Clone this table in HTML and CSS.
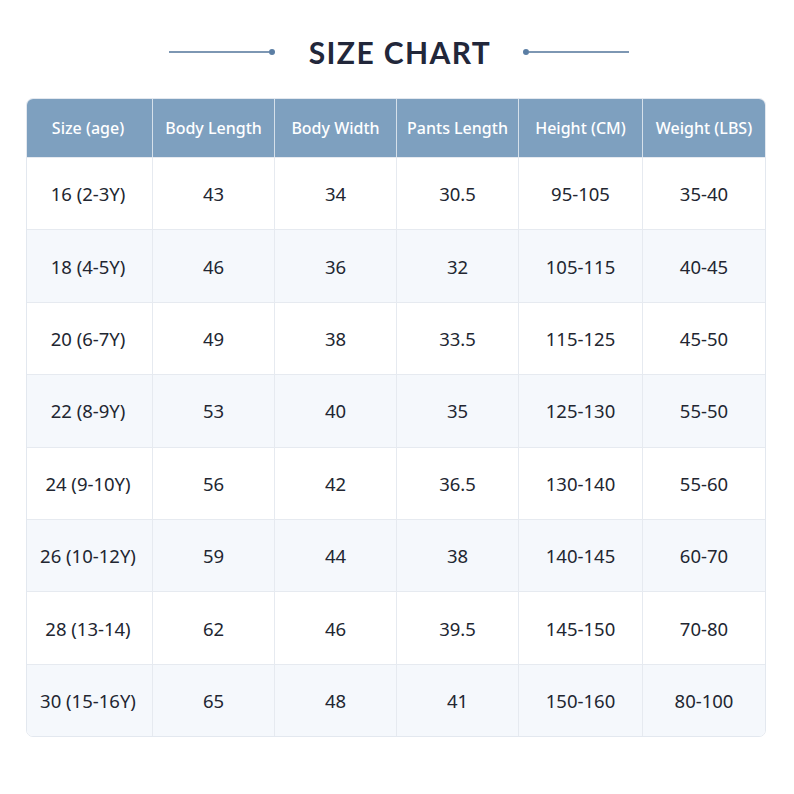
FILE: index.html
```html
<!DOCTYPE html>
<html>
<head>
<meta charset="utf-8">
<link rel="stylesheet" href="styles.css">
</head>
<body>
<div class="page">
  <div class="title-row">
    <span class="rule left"><span class="line"></span><span class="dot"></span></span>
    <h1 class="title">SIZE CHART</h1>
    <span class="rule right"><span class="dot"></span><span class="line"></span></span>
  </div>
  <div class="chart">
    <div class="row head">
      <div class="cell">Size (age)</div>
      <div class="cell">Body Length</div>
      <div class="cell">Body Width</div>
      <div class="cell">Pants Length</div>
      <div class="cell">Height (CM)</div>
      <div class="cell">Weight (LBS)</div>
    </div>
    <div class="row"><div class="cell">16 (2-3Y)</div><div class="cell">43</div><div class="cell">34</div><div class="cell">30.5</div><div class="cell">95-105</div><div class="cell">35-40</div></div>
    <div class="row alt"><div class="cell">18 (4-5Y)</div><div class="cell">46</div><div class="cell">36</div><div class="cell">32</div><div class="cell">105-115</div><div class="cell">40-45</div></div>
    <div class="row"><div class="cell">20 (6-7Y)</div><div class="cell">49</div><div class="cell">38</div><div class="cell">33.5</div><div class="cell">115-125</div><div class="cell">45-50</div></div>
    <div class="row alt"><div class="cell">22 (8-9Y)</div><div class="cell">53</div><div class="cell">40</div><div class="cell">35</div><div class="cell">125-130</div><div class="cell">55-50</div></div>
    <div class="row"><div class="cell">24 (9-10Y)</div><div class="cell">56</div><div class="cell">42</div><div class="cell">36.5</div><div class="cell">130-140</div><div class="cell">55-60</div></div>
    <div class="row alt"><div class="cell">26 (10-12Y)</div><div class="cell">59</div><div class="cell">44</div><div class="cell">38</div><div class="cell">140-145</div><div class="cell">60-70</div></div>
    <div class="row"><div class="cell">28 (13-14)</div><div class="cell">62</div><div class="cell">46</div><div class="cell">39.5</div><div class="cell">145-150</div><div class="cell">70-80</div></div>
    <div class="row alt last"><div class="cell">30 (15-16Y)</div><div class="cell">65</div><div class="cell">48</div><div class="cell">41</div><div class="cell">150-160</div><div class="cell">80-100</div></div>
  </div>
</div>
</body>
</html>
```
FILE: styles.css
```css
html, body {
  margin: 0;
  padding: 0;
  background: #ffffff;
}
.page {
  width: 794px;
  height: 794px;
  font-family: "Noto Sans", "Open Sans", sans-serif;
  box-sizing: border-box;
  padding-top: 30px;
}
.title-row {
  height: 44px;
  display: flex;
  align-items: center;
  justify-content: center;
  margin-bottom: 24px;
  padding-left: 4px;
}
.title {
  margin: 0 32px 0 34px;
  font-family: "Lato", "Noto Sans", sans-serif;
  font-size: 30px;
  font-weight: 700;
  letter-spacing: 1.4px;
  color: #22273a;
  line-height: 44px;
}
.rule {
  display: flex;
  align-items: center;
}
.rule .line {
  width: 100px;
  height: 1.5px;
  background: #7d97b3;
}
.rule .dot {
  width: 6px;
  height: 6px;
  border-radius: 50%;
  background: #5b7ea4;
}
.chart {
  margin: 0 28px 0 26px;
  border: 1px solid #e3e8ef;
  border-radius: 7px;
  overflow: hidden;
}
.row {
  display: grid;
  grid-template-columns: 125px 122px 122px 122px 124px 1fr;
  height: 72.4px;
  border-top: 1px solid #e6eaf0;
  box-sizing: border-box;
  background: #ffffff;
}
.row.alt {
  background: #f5f8fc;
}
.row.head {
  height: 58px;
  border-top: none;
  background: #7ea0bf;
}
.cell {
  display: flex;
  align-items: center;
  justify-content: center;
  font-size: 18.5px;
  color: #222631;
  border-left: 1px solid #e6eaf0;
}
.cell:first-child {
  border-left: none;
  padding-right: 3px;
}
.head .cell {
  color: #ffffff;
  font-size: 16px;
  font-weight: 500;
  border-left: 1px solid #d5e0ea;
}
.head .cell:first-child {
  border-left: none;
}
```
